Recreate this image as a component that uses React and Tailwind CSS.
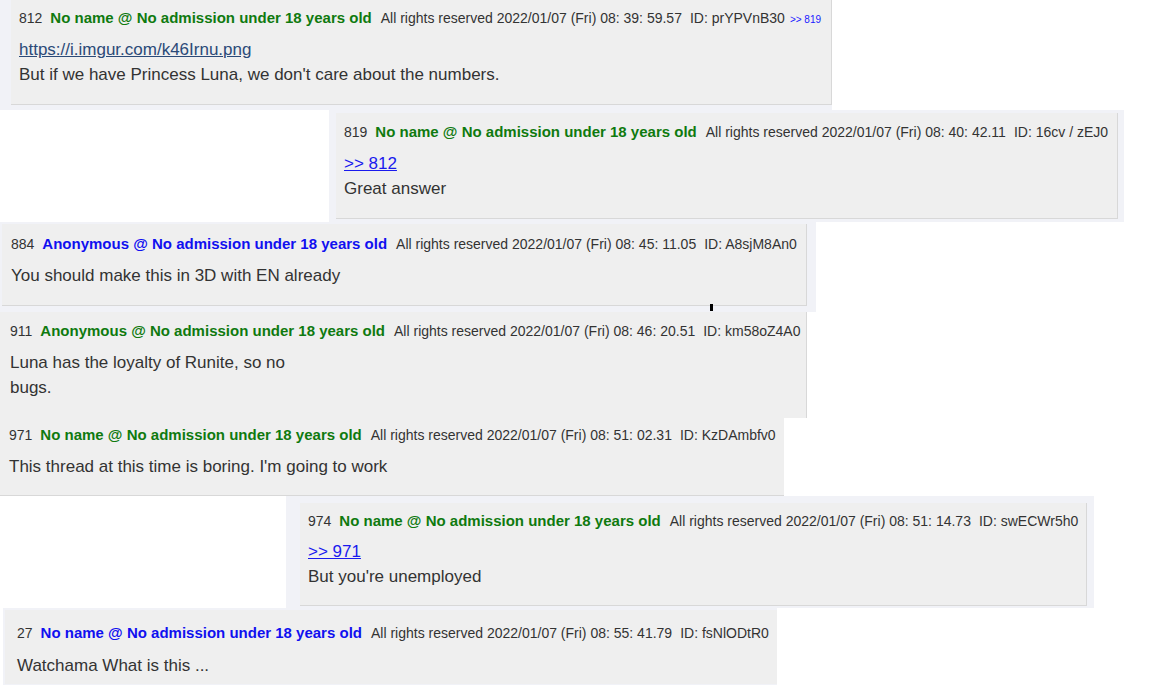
const posts = [
  {
    no: '812',
    name: 'No name @ No admission under 18 years old',
    nameColor: 'text-[#0f7a0f]',
    date: '2022/01/07 (Fri) 08: 39: 59.57',
    id: 'prYPVnB30',
    backref: '>> 819',
    link: 'https://i.imgur.com/k46Irnu.png',
    lines: ["But if we have Princess Luna, we don't care about the numbers."],
    frame: 'ml-0 w-[832px] h-[110px] pl-[11px] pb-[5px]',
    card: 'border-r border-b',
    pad: 'pl-2 pt-[9px]',
    gap: 'mt-[8px]',
  },
  {
    no: '819',
    name: 'No name @ No admission under 18 years old',
    nameColor: 'text-[#0f7a0f]',
    date: '2022/01/07 (Fri) 08: 40: 42.11',
    id: '16cv / zEJ0',
    quote: '>> 812',
    lines: ['Great answer'],
    frame: 'ml-[329px] w-[795px] h-[112px] pl-[7px] pr-[6px] pt-[3px] pb-[3px]',
    card: 'border-r border-b',
    pad: 'pl-2 pt-[10px]',
    gap: 'mt-[10px]',
  },
  {
    no: '884',
    name: 'Anonymous @ No admission under 18 years old',
    nameColor: 'text-[#1010f0]',
    date: '2022/01/07 (Fri) 08: 45: 11.05',
    id: 'A8sjM8An0',
    lines: ['You should make this in 3D with EN already'],
    frame: 'ml-0 w-[816px] h-[90px] pl-[2px] pr-[9px] pt-[2px] pb-[6px]',
    card: 'border-r border-b',
    pad: 'pl-[9px] pt-[11px]',
    gap: 'mt-[10px]',
    tick: true,
  },
  {
    no: '911',
    name: 'Anonymous @ No admission under 18 years old',
    nameColor: 'text-[#0f7a0f]',
    date: '2022/01/07 (Fri) 08: 46: 20.51',
    id: 'km58oZ4A0',
    lines: ['Luna has the loyalty of Runite, so no', 'bugs.'],
    frame: 'ml-0 w-[807px] h-[106px]',
    card: 'border-r',
    pad: 'pl-[10px] pt-[10px]',
    gap: 'mt-[10px]',
  },
  {
    no: '971',
    name: 'No name @ No admission under 18 years old',
    nameColor: 'text-[#0f7a0f]',
    date: '2022/01/07 (Fri) 08: 51: 02.31',
    id: 'KzDAmbfv0',
    lines: ["This thread at this time is boring. I'm going to work"],
    frame: 'ml-0 w-[784px] h-[78px]',
    card: 'border-b',
    pad: 'pl-[9px] pt-[8px]',
    gap: 'mt-[10px]',
  },
  {
    no: '974',
    name: 'No name @ No admission under 18 years old',
    nameColor: 'text-[#0f7a0f]',
    date: '2022/01/07 (Fri) 08: 51: 14.73',
    id: 'swECWr5h0',
    quote: '>> 971',
    lines: ["But you're unemployed"],
    frame: 'ml-[286px] w-[808px] h-[112px] pl-[14px] pr-[7px] pt-[7px] pb-[2px]',
    card: 'border-r border-b',
    pad: 'pl-2 pt-[9px]',
    gap: 'mt-[9px]',
  },
  {
    no: '27',
    name: 'No name @ No admission under 18 years old',
    nameColor: 'text-[#1010f0]',
    date: '2022/01/07 (Fri) 08: 55: 41.79',
    id: 'fsNlODtR0',
    lines: ['Watchama What is this ...'],
    frame: 'ml-[3px] w-[774px] h-[77px] pl-[2px] pt-[2px] pb-px',
    card: '',
    pad: 'pl-3 pt-[14px]',
    gap: 'mt-[11px]',
  },
];

const Post = ({ post }) => (
  <div className={`relative bg-[#f1f2f7] ${post.frame}`}>
    <div className={`h-full bg-[#efefef] border-[#d8d8d8] text-[#333] ${post.card} ${post.pad}`}>
      <div className="flex items-baseline whitespace-nowrap text-[14px] leading-[18px]">
        <span>{post.no}</span>
        <span className={`ml-[8px] font-bold text-[15px] ${post.nameColor}`}>{post.name}</span>
        <span className="ml-[9px]">All rights reserved {post.date}</span>
        <span className="ml-[8px]">ID: {post.id}</span>
        {post.backref && (
          <span className="ml-[5px] text-[10px] text-[#1a1aff]">{post.backref}</span>
        )}
      </div>
      <div className={`${post.gap} text-[17px] leading-[25px]`}>
        {post.link && (
          <div>
            <a className="underline text-[#2b4a78]">{post.link}</a>
          </div>
        )}
        {post.quote && (
          <div>
            <a className="underline text-[#1a1aee]">{post.quote}</a>
          </div>
        )}
        {post.lines.map((l, i) => (
          <div key={i}>{l}</div>
        ))}
      </div>
    </div>
    {post.tick && <div className="absolute left-[710px] bottom-[1px] w-[3px] h-[7px] bg-black" />}
  </div>
);

export default function App() {
  return (
    <div className="w-[1176px] h-[693px] bg-white overflow-hidden font-['Liberation_Sans',Arial,sans-serif]">
      {posts.map((p) => (
        <Post key={p.no} post={p} />
      ))}
    </div>
  );
}
